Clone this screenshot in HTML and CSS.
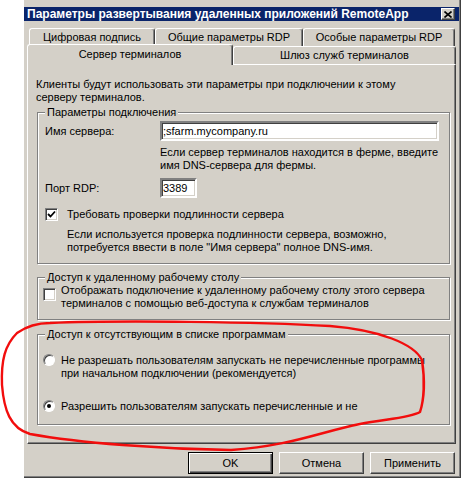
FILE: index.html
```html
<!DOCTYPE html>
<html lang="ru">
<head>
<meta charset="utf-8">
<title>Параметры развертывания удаленных приложений RemoteApp</title>
<link rel="stylesheet" href="styles.css">
</head>
<body>
<div class="dialog">
  <div class="titlebar">
    <span class="title">Параметры развертывания удаленных приложений RemoteApp</span>
    <span class="close"><svg width="8" height="7" viewBox="0 0 8 7"><path d="M0.5 0.5 L7.5 6.5 M7.5 0.5 L0.5 6.5" stroke="#000" stroke-width="1.6" fill="none"/></svg></span>
  </div>
  <div class="tabs">
    <div class="tabrow back">
      <div class="tab t1">Цифровая подпись</div>
      <div class="tab t2">Общие параметры RDP</div>
      <div class="tab t3">Особые параметры RDP</div>
    </div>
    <div class="tabrow front">
      <div class="tab sel">Сервер терминалов</div>
      <div class="tab t5">Шлюз служб терминалов</div>
    </div>
  </div>
  <div class="panel">
    <p class="intro">Клиенты будут использовать эти параметры при подключении к этому<br>серверу терминалов.</p>

    <fieldset class="group g1">
      <legend>Параметры подключения</legend>
      <div class="field">
        <span class="lbl">Имя сервера:</span>
        <span class="input wide">;sfarm.mycompany.ru</span>
      </div>
      <p class="note">Если сервер терминалов находится в ферме, введите<br>имя DNS-сервера для фермы.</p>
      <div class="field port">
        <span class="lbl">Порт RDP:</span>
        <span class="input narrow">3389</span>
      </div>
      <div class="check c1">
        <span class="box"><svg width="9" height="9" viewBox="0 0 9 9"><path d="M1 4 L3.5 6.5 L8 1.5" stroke="#000" stroke-width="1.8" fill="none"/></svg></span>
        <span class="clabel">Требовать проверки подлинности сервера</span>
      </div>
      <p class="note2">Если используется проверка подлинности сервера, возможно,<br>потребуется ввести в поле "Имя сервера" полное DNS-имя.</p>
    </fieldset>

    <fieldset class="group g2">
      <legend>Доступ к удаленному рабочему столу</legend>
      <div class="check c2">
        <span class="box"></span>
        <span class="clabel">Отображать подключение к удаленному рабочему столу этого сервера<br>терминалов с помощью веб-доступа к службам терминалов</span>
      </div>
    </fieldset>

    <fieldset class="group g3">
      <legend>Доступ к отсутствующим в списке программам</legend>
      <div class="radio r1">
        <span class="dot"></span>
        <span class="clabel">Не разрешать пользователям запускать не перечисленные программы<br>при начальном подключении (рекомендуется)</span>
      </div>
      <div class="radio r2">
        <span class="dot on"></span>
        <span class="clabel">Разрешить пользователям запускать перечисленные и не</span>
      </div>
    </fieldset>
  </div>
  <div class="buttons">
    <span class="btn default">OK</span>
    <span class="btn">Отмена</span>
    <span class="btn">Применить</span>
  </div>
</div>
<svg class="annot" width="462" height="480" viewBox="0 0 462 480">
  <path d="M50 323 C120 320, 260 322, 330 326 C380 330, 414 344, 422 360 C425 380, 424 400, 420 412 C410 418, 385 419, 360 424 C320 432, 290 446, 231 450 C160 449, 80 443, 30 434 C10 428, 4 410, 2 385 C1 360, 5 345, 17 333 C27 326, 40 323, 50 323 Z" stroke="#f20d0d" stroke-width="2.4" fill="none" stroke-linejoin="round"/>
</svg>
</body>
</html>
```
FILE: styles.css
```css
* { box-sizing: border-box; }

body {
  margin: 0;
  background: #fff;
  font: 11px/13px "Liberation Sans", Arial, sans-serif;
  color: #000;
  position: relative;
  width: 462px;
  height: 480px;
  overflow: hidden;
}

.dialog {
  margin-left: 24px;
  width: 437px;
  height: 478px;
  background: #d4d0c8;
  border-right: 1px solid #404040;
  border-bottom: 1px solid #404040;
  box-shadow: inset -1px -1px 0 #808080;
  padding-top: 7px;
  display: flex;
  flex-direction: column;
}

.titlebar {
  height: 14px;
  margin-right: 1px;
  background: #0a246a;
  color: #fff;
  font-weight: bold;
  font-size: 12px;
  line-height: 14px;
  display: flex;
  align-items: center;
  justify-content: space-between;
  padding: 0 4px 0 3px;
  white-space: nowrap;
}

.close {
  width: 14px;
  height: 12px;
  background: #d4d0c8;
  border: 1px solid;
  border-color: #fff #404040 #404040 #fff;
  box-shadow: inset -1px -1px 0 #808080;
  display: flex;
  align-items: center;
  justify-content: center;
}

.tabs {
  margin: 7px 0 0 3px;
  width: 429px;
}

.tabrow {
  display: flex;
  height: 18px;
}

.tabrow.back { padding-left: 2px; }

.tabrow.front {
  position: relative;
  z-index: 2;
}

.tab {
  height: 18px;
  border: 1px solid;
  border-color: #fff #404040 transparent #fff;
  border-bottom: none;
  border-radius: 3px 3px 0 0;
  box-shadow: inset -1px 0 0 #808080;
  background: #d4d0c8;
  text-align: center;
  line-height: 17px;
  white-space: nowrap;
}

.t1 { width: 126px; }
.t2 { width: 148px; }
.t3 { width: 152px; }
.t5 { width: 223px; }

.tab.sel {
  width: 206px;
  height: 21px;
  margin-top: -2px;
  line-height: 18px;
  position: relative;
  z-index: 3;
}

.panel {
  width: 429px;
  height: 380px;
  margin-left: 3px;
  border: 1px solid;
  border-color: #fff #404040 #404040 #fff;
  box-shadow: inset -1px -1px 0 #808080;
  padding: 13px 0 0 8px;
}

.intro {
  margin: 0;
  white-space: nowrap;
}

.group {
  margin: 2px 5px 0 1px;
  border: 1px solid #808080;
  box-shadow: 1px 1px 0 #fff, inset 1px 1px 0 #fff;
  padding: 0 0 9px 7px;
  min-width: 0;
}

.group legend {
  padding: 0 2px;
  line-height: 13px;
  background: #d4d0c8;
  white-space: nowrap;
}

.field {
  display: flex;
  align-items: center;
  height: 20px;
  margin-top: 2px;
}

.lbl { width: 115px; flex: none; }

.input {
  height: 20px;
  border: 2px solid;
  border-color: #808080 #fff #fff #808080;
  box-shadow: inset 1px 1px 0 #404040, inset -1px -1px 0 #d4d0c8;
  background: #fff;
  padding-left: 1px;
  line-height: 16px;
  white-space: nowrap;
}

.input.wide { width: 279px; }
.input.narrow { width: 37px; }

.note {
  margin: 5px 0 0 115px;
  white-space: nowrap;
}

.field.port { margin-top: 6px; }

.check, .radio {
  display: flex;
  align-items: flex-start;
}

.check.c1 { margin-top: 10px; }

.box {
  width: 13px;
  height: 13px;
  flex: none;
  border: 1px solid;
  border-color: #808080 #fff #fff #808080;
  box-shadow: inset 1px 1px 0 #404040, inset -1px -1px 0 #d4d0c8;
  background: #fff;
  display: flex;
  align-items: center;
  justify-content: center;
}

.c1 .clabel { margin-left: 9px; white-space: nowrap; }

.note2 {
  margin: 7px 0 0 22px;
  white-space: nowrap;
}

.g2 { margin-top: 7px; padding-bottom: 9px; }

.c2 .box { margin: 4px 0 0 -2px; }
.c2 .clabel { margin: 0 0 0 5px; white-space: nowrap; }

.g3 { margin-top: 8px; padding-bottom: 11px; }

.radio.r1 { margin-top: 13px; }
.radio.r2 { margin-top: 20px; }

.dot {
  width: 12px;
  height: 12px;
  flex: none;
  margin: 0 0 0 -2px;
  border-radius: 50%;
  border: 1px solid;
  border-color: #808080 #fff #fff #808080;
  box-shadow: inset 1px 1px 0 #404040;
  background: #fff;
  display: flex;
  align-items: center;
  justify-content: center;
}

.dot.on::after {
  content: "";
  width: 4px;
  height: 4px;
  border-radius: 50%;
  background: #000;
}

.radio .clabel { margin-left: 6px; white-space: nowrap; }

.buttons {
  display: flex;
  justify-content: flex-end;
  gap: 6px;
  margin: 8px 5px 0 0;
}

.btn {
  width: 85px;
  height: 22px;
  border: 1px solid;
  border-color: #fff #404040 #404040 #fff;
  box-shadow: inset -1px -1px 0 #808080;
  text-align: center;
  line-height: 20px;
}

.btn.default {
  border-color: #000;
  box-shadow: inset 1px 1px 0 #fff, inset -1px -1px 0 #404040, inset -2px -2px 0 #808080;
}

.annot {
  position: absolute;
  left: 0;
  top: 0;
  pointer-events: none;
}
```
